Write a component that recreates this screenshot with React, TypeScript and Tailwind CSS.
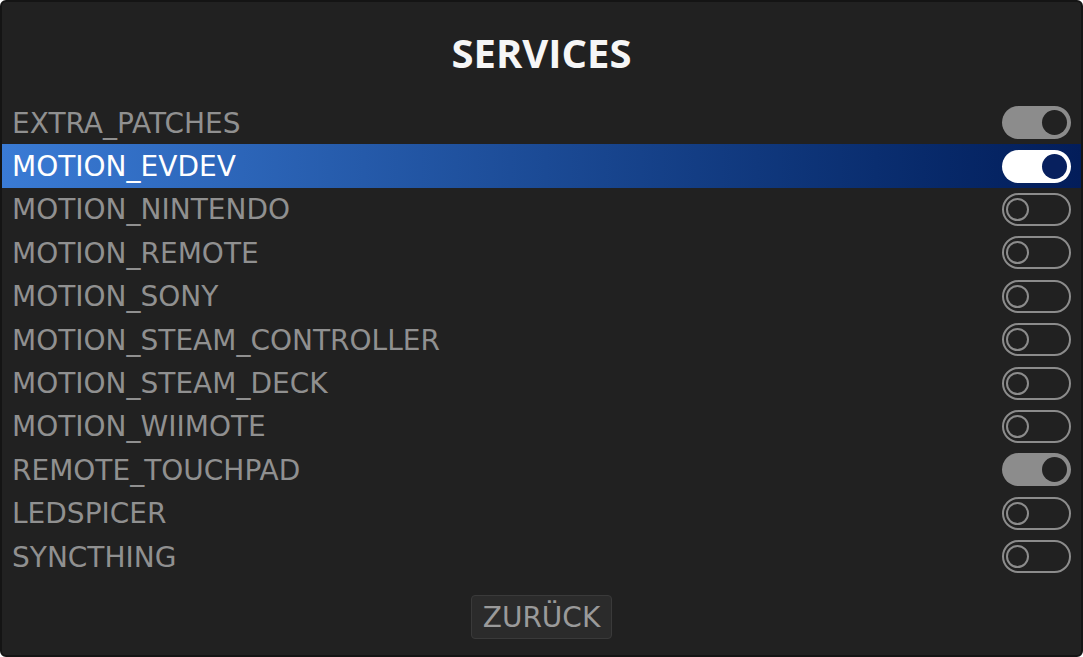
import { useState } from "react";

type Item = { name: string; on: boolean };

const items: Item[] = [
  { name: "EXTRA_PATCHES", on: true },
  { name: "MOTION_EVDEV", on: true },
  { name: "MOTION_NINTENDO", on: false },
  { name: "MOTION_REMOTE", on: false },
  { name: "MOTION_SONY", on: false },
  { name: "MOTION_STEAM_CONTROLLER", on: false },
  { name: "MOTION_STEAM_DECK", on: false },
  { name: "MOTION_WIIMOTE", on: false },
  { name: "REMOTE_TOUCHPAD", on: true },
  { name: "LEDSPICER", on: false },
  { name: "SYNCTHING", on: false },
];

function Toggle({ on, selected }: { on: boolean; selected: boolean }) {
  if (on) {
    return (
      <div
        className={
          "flex h-[33px] w-[69px] items-center justify-end rounded-full pr-[4px] " +
          (selected ? "bg-white" : "bg-[#8c8c8c]")
        }
      >
        <div
          className={
            "h-[25px] w-[25px] rounded-full " +
            (selected ? "bg-[#07205e]" : "bg-[#222222]")
          }
        />
      </div>
    );
  }
  return (
    <div className="flex h-[33px] w-[69px] items-center rounded-full border-2 border-[#8c8c8c] pl-[2px]">
      <div className="h-[23px] w-[23px] rounded-full border-2 border-[#8c8c8c]" />
    </div>
  );
}

export default function App() {
  const [selected] = useState(1);

  return (
    <div
      className="h-[657px] w-[1083px] overflow-hidden rounded-md border-2 border-[#141414] bg-[#212121]"
      style={{ fontFamily: '"DejaVu Sans", "Noto Sans", sans-serif' }}
    >
      <h1
        className="pt-[25px] text-center text-[40px] leading-[52px] font-bold text-[#f6f6f6]"
        style={{ fontFamily: '"Open Sans", "Noto Sans", sans-serif' }}
      >
        SERVICES
      </h1>

      {/* list */}
      <ul className="mt-[22px]">
        {items.map((item, i) => {
          const isSel = i === selected;
          return (
            <li
              key={item.name}
              className={
                "flex h-[43.4px] items-center justify-between pl-[10px] pr-[10px] " +
                (isSel
                  ? "bg-gradient-to-r from-[#3a7bd5] to-[#031d5a] text-white"
                  : "text-[#909090]")
              }
            >
              <span className="pt-[2px] text-[28px] leading-none">{item.name}</span>
              <Toggle on={item.on} selected={isSel} />
            </li>
          );
        })}
      </ul>

      <div className="mt-[17px] flex justify-center">
        <button className="h-[44px] rounded-[4px] border border-[#3a3a3a] bg-[#2b2b2b] px-[11px] pt-[2px] text-[28px] leading-none text-[#9a9a9a]">
          ZURÜCK
        </button>
      </div>
    </div>
  );
}
